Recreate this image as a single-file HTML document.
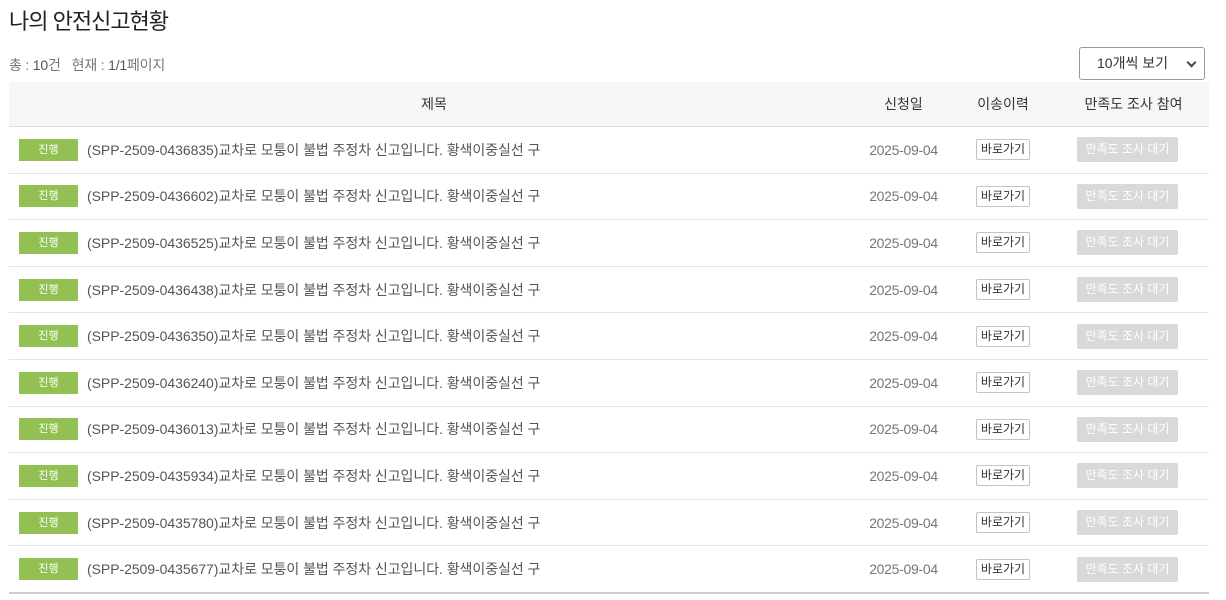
<!DOCTYPE html><html><head><meta charset="utf-8"><style>
body{margin:0;background:#fff;font-family:"Liberation Sans","Noto Sans CJK KR",sans-serif;color:#555;}
h1{position:absolute;left:9px;top:4px;margin:0;font-size:22px;font-weight:normal;color:#222;letter-spacing:-1px}
.info{position:absolute;left:9px;top:55px;font-size:14px;color:#777;letter-spacing:-0.2px}
.info b{font-weight:normal;color:#555}
.sel{position:absolute;left:1079px;top:47px;width:126px;height:33px;border:1px solid #999;border-radius:3px;box-sizing:border-box;font-size:14px;color:#333;line-height:31px;padding-left:17px}
.sel:after{content:"";position:absolute;right:9px;top:11px;width:5px;height:5px;border-right:2px solid #444;border-bottom:2px solid #444;transform:rotate(45deg)}
table{position:absolute;left:9px;top:82px;width:1200px;border-collapse:collapse;font-size:14px}
th{background:#f6f6f6;height:44px;font-weight:normal;color:#333;border-bottom:1px solid #ddd;padding:0}
td{height:45.6px;border-bottom:1px solid #e3e3e3;padding:0}
tr:last-child td{border-bottom:2px solid #ccc}
.b{display:inline-block;width:59px;height:22px;background:#92c052;color:#fff;font-size:11px;text-align:center;line-height:22px;margin:0 9px 0 10px;vertical-align:middle}
.t{vertical-align:middle;letter-spacing:-0.05px}
.d{text-align:center;color:#777;letter-spacing:-0.3px}
.g{text-align:center}.g span{display:inline-block;border:1px solid #c4c4c4;border-radius:2px;font-size:12px;color:#333;padding:0 4px;height:19px;line-height:19px}
.s{text-align:center}.s span{display:inline-block;background:#d9d9d9;color:#fff;border-radius:2px;font-size:12px;width:101px;height:25px;line-height:25px;margin-right:12px}
</style></head><body>
<h1>나의 안전신고현황</h1>
<div class="info">총 : <b>10</b>건 &nbsp;&nbsp;현재 : <b>1/1</b>페이지</div>
<div class="sel">10개씩 보기</div>
<table>
<tr><th style="width:850px">제목</th><th style="width:89px">신청일</th><th style="width:110px">이송이력</th><th>만족도 조사 참여</th></tr>
<tr><td><span class="b">진행</span><span class="t">(SPP-2509-0436835)교차로 모퉁이 불법 주정차 신고입니다. 황색이중실선 구</span></td><td class="d">2025-09-04</td><td class="g"><span>바로가기</span></td><td class="s"><span>만족도 조사 대기</span></td></tr>
<tr><td><span class="b">진행</span><span class="t">(SPP-2509-0436602)교차로 모퉁이 불법 주정차 신고입니다. 황색이중실선 구</span></td><td class="d">2025-09-04</td><td class="g"><span>바로가기</span></td><td class="s"><span>만족도 조사 대기</span></td></tr>
<tr><td><span class="b">진행</span><span class="t">(SPP-2509-0436525)교차로 모퉁이 불법 주정차 신고입니다. 황색이중실선 구</span></td><td class="d">2025-09-04</td><td class="g"><span>바로가기</span></td><td class="s"><span>만족도 조사 대기</span></td></tr>
<tr><td><span class="b">진행</span><span class="t">(SPP-2509-0436438)교차로 모퉁이 불법 주정차 신고입니다. 황색이중실선 구</span></td><td class="d">2025-09-04</td><td class="g"><span>바로가기</span></td><td class="s"><span>만족도 조사 대기</span></td></tr>
<tr><td><span class="b">진행</span><span class="t">(SPP-2509-0436350)교차로 모퉁이 불법 주정차 신고입니다. 황색이중실선 구</span></td><td class="d">2025-09-04</td><td class="g"><span>바로가기</span></td><td class="s"><span>만족도 조사 대기</span></td></tr>
<tr><td><span class="b">진행</span><span class="t">(SPP-2509-0436240)교차로 모퉁이 불법 주정차 신고입니다. 황색이중실선 구</span></td><td class="d">2025-09-04</td><td class="g"><span>바로가기</span></td><td class="s"><span>만족도 조사 대기</span></td></tr>
<tr><td><span class="b">진행</span><span class="t">(SPP-2509-0436013)교차로 모퉁이 불법 주정차 신고입니다. 황색이중실선 구</span></td><td class="d">2025-09-04</td><td class="g"><span>바로가기</span></td><td class="s"><span>만족도 조사 대기</span></td></tr>
<tr><td><span class="b">진행</span><span class="t">(SPP-2509-0435934)교차로 모퉁이 불법 주정차 신고입니다. 황색이중실선 구</span></td><td class="d">2025-09-04</td><td class="g"><span>바로가기</span></td><td class="s"><span>만족도 조사 대기</span></td></tr>
<tr><td><span class="b">진행</span><span class="t">(SPP-2509-0435780)교차로 모퉁이 불법 주정차 신고입니다. 황색이중실선 구</span></td><td class="d">2025-09-04</td><td class="g"><span>바로가기</span></td><td class="s"><span>만족도 조사 대기</span></td></tr>
<tr><td><span class="b">진행</span><span class="t">(SPP-2509-0435677)교차로 모퉁이 불법 주정차 신고입니다. 황색이중실선 구</span></td><td class="d">2025-09-04</td><td class="g"><span>바로가기</span></td><td class="s"><span>만족도 조사 대기</span></td></tr>
</table>
</body></html>
